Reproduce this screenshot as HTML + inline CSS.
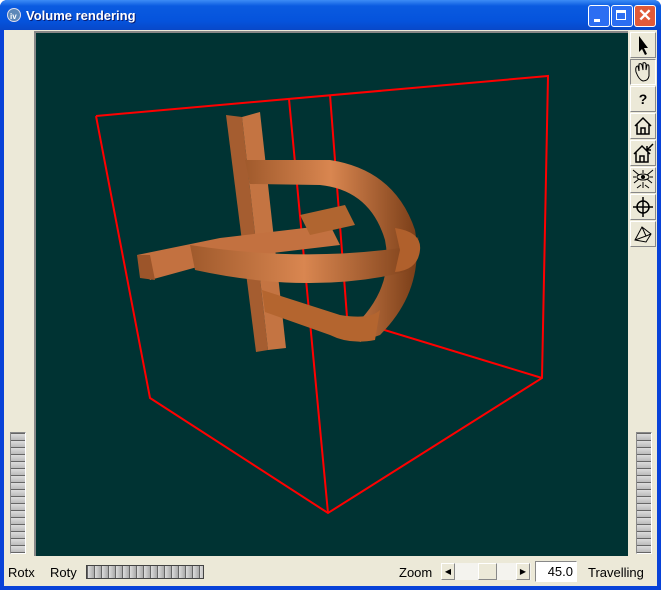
<!DOCTYPE html>
<html><head><style>
body{margin:0;width:661px;height:590px;overflow:hidden;font-family:"Liberation Sans",sans-serif;}
.win{position:absolute;left:0;top:0;width:661px;height:590px;background:#0842d8;border-radius:7px 7px 0 0;}
.title{position:absolute;left:0;top:0;width:661px;height:30px;background:linear-gradient(#3d8cf6,#0a5be0 20%,#0553dc 70%,#0848c8);border-radius:7px 7px 0 0;}
.title span{position:absolute;left:26px;top:8px;color:#fff;font-weight:bold;font-size:13px;text-shadow:1px 1px #0a1e72;}
.client{position:absolute;left:4px;top:30px;width:653px;height:556px;background:#ece9d8;}
.vp{position:absolute;left:34px;top:31px;width:594px;height:525px;background:#003333;border-top:2px solid #888;border-left:2px solid #888;box-sizing:border-box;}
.tb{position:absolute;left:630px;width:26px;height:26px;background:#ece9d8;border:1px solid;border-color:#fff #888 #888 #fff;box-sizing:border-box;}
.btn{position:absolute;top:5px;width:20px;height:20px;border:1px solid #fff;border-radius:3px;}
.wheelv{position:absolute;width:14px;height:120px;border:1px solid;border-color:#888 #fff #fff #888;background:repeating-linear-gradient(#666 0,#666 1px,#ddd 1px,#bbb 7px);}
.lbl{position:absolute;top:565px;font-size:13px;color:#000;}
</style></head><body>
<div class="win">
<div class="title">
<svg style="position:absolute;left:7px;top:8px" width="14" height="14"><circle cx="7" cy="7" r="6.5" fill="#5d88b8" stroke="#dde"/><text x="3" y="11" font-size="8" fill="#fff" font-weight="bold">iv</text></svg>
<span>Volume rendering</span>
<div class="btn" style="left:588px;background:#2c6ef2"><div style="position:absolute;left:5px;top:13px;width:6px;height:3px;background:#fff"></div></div>
<div class="btn" style="left:611px;background:#2c6ef2"><div style="position:absolute;left:4px;top:4px;width:10px;height:10px;border:1px solid #fff;border-top-width:3px;box-sizing:border-box"></div></div>
<div class="btn" style="left:634px;background:#e05a38;color:#fff;font-size:17px;text-align:center;line-height:20px;font-weight:bold">✕</div>
</div>
<div class="client"></div>
<div class="vp">
<svg width="594" height="525" style="position:absolute;left:-2px;top:-2px" viewBox="34 31 594 525">
<g stroke="#ff0000" stroke-width="2" fill="none">
<polyline points="96,116 548,76 542,378 328,513 150,398 96,116"/>
<line x1="289" y1="99" x2="328" y2="513"/>
<line x1="330" y1="95" x2="348" y2="330"/>
<line x1="378" y1="328" x2="542" y2="378"/>
</g>
<defs><linearGradient id="g" x1="0" y1="0" x2="1" y2="0"><stop offset="0" stop-color="#a05a2c"/><stop offset=".5" stop-color="#d98650"/><stop offset="1" stop-color="#7a3e18"/></linearGradient></defs>
<g fill="#c87540">
<polygon points="226,115 242,117 268,350 256,352" fill="#a55d30"/>
<polygon points="242,117 260,112 286,348 268,350" fill="#c47442"/>
<path d="M245,160 L330,160 Q395,170 415,230 Q425,290 380,335 L360,342 L350,330 Q395,290 385,240 Q370,190 320,185 L250,184 Z" fill="url(#g)"/>
<path d="M262,290 L340,315 Q370,320 380,310 L375,340 Q350,345 330,335 L265,312 Z" fill="#b4652f"/>
<polygon points="137,255 220,238 330,225 340,245 230,258 150,280" fill="#c37140"/>
<polygon points="137,255 150,255 155,280 140,278" fill="#9c552a"/>
<path d="M190,245 Q300,262 400,248 Q420,240 418,235 Q420,262 405,272 Q310,295 195,270 Z" fill="url(#g)"/>
<path d="M395,228 Q422,232 420,250 Q418,270 395,272 L400,250 Z" fill="#b0602c"/>
<polygon points="300,215 345,205 355,225 310,235" fill="#b06530"/>
</g>
</svg>
</div>
<div class="tb" style="top:32px"><svg width="24" height="24"><path d="M8,3 L8,19 L11,16 L14,22 L16,21 L13,15 L17,15 Z" fill="#000"/></svg></div>
<div class="tb" style="top:59px;border-color:#888 #fff #fff #888"><svg width="24" height="24"><path d="M5,12 Q4,6 7,6 L8,11 L8,4 Q10,3 11,5 L12,10 L12,3 Q14,2 15,4 L15,10 L16,5 Q18,4 18,7 L18,16 Q17,21 12,21 Q8,20 5,12Z" fill="none" stroke="#000"/></svg></div>
<div class="tb" style="top:86px;font-weight:bold;text-align:center;font-size:14px;line-height:24px">?</div>
<div class="tb" style="top:113px"><svg width="24" height="24"><path d="M4,12 L12,4 L20,12 M6,10 L6,20 L18,20 L18,10 M10,20 L10,14 L14,14 L14,20" fill="none" stroke="#000" stroke-width="1.5"/></svg></div>
<div class="tb" style="top:140px"><svg width="24" height="24"><path d="M3,13 L11,5 L19,13 M5,11 L5,21 L17,21 L17,11 M9,21 L9,15 L13,15 L13,21 M22,3 L16,9 M16,5 L16,9 L20,9" fill="none" stroke="#000" stroke-width="1.5"/></svg></div>
<div class="tb" style="top:167px"><svg width="24" height="24"><g stroke="#000" fill="none"><ellipse cx="12" cy="9" rx="6" ry="3"/><circle cx="12" cy="9" r="1.5" fill="#000"/><path d="M2,2 L8,7 M22,2 L16,7 M2,9 L5,9 M22,9 L19,9 M3,15 L8,11 M21,15 L16,11 M12,2 L12,5 M6,20 L10,17 M18,20 L14,17 M12,14 L12,20"/></g></svg></div>
<div class="tb" style="top:194px"><svg width="24" height="24"><g stroke="#000" fill="none" stroke-width="1.5"><circle cx="12" cy="12" r="6"/><path d="M12,2 L12,22 M2,12 L22,12"/></g></svg></div>
<div class="tb" style="top:221px"><svg width="24" height="24"><path d="M4,18 L11,5 L20,12 L15,20 Z M4,18 L15,14 L20,12 M11,5 L15,14" fill="none" stroke="#000"/></svg></div>
<div class="wheelv" style="left:10px;top:432px"></div>
<div class="wheelv" style="left:636px;top:432px"></div>
<span class="lbl" style="left:8px">Rotx</span>
<span class="lbl" style="left:50px">Roty</span>
<div style="position:absolute;left:86px;top:565px;width:116px;height:12px;border:1px solid #444;background:repeating-linear-gradient(90deg,#666 0,#666 1px,#ddd 1px,#aaa 7px)"></div>
<span class="lbl" style="left:399px">Zoom</span>
<div style="position:absolute;left:441px;top:563px;width:90px;height:17px;background:#f4f3ee"></div>
<div class="tb" style="left:441px;top:563px;width:14px;height:17px;font-size:8px;line-height:16px;text-align:center">◀</div>
<div class="tb" style="left:478px;top:563px;width:19px;height:17px"></div>
<div class="tb" style="left:516px;top:563px;width:14px;height:17px;font-size:8px;line-height:16px;text-align:center">▶</div>
<div style="position:absolute;left:535px;top:561px;width:42px;height:21px;background:#fff;border:1px solid;border-color:#888 #fff #fff #888;box-sizing:border-box;font-size:13px;text-align:right;padding-right:3px;line-height:19px">45.0</div>
<span class="lbl" style="left:588px">Travelling</span>
</div>
</body></html>
